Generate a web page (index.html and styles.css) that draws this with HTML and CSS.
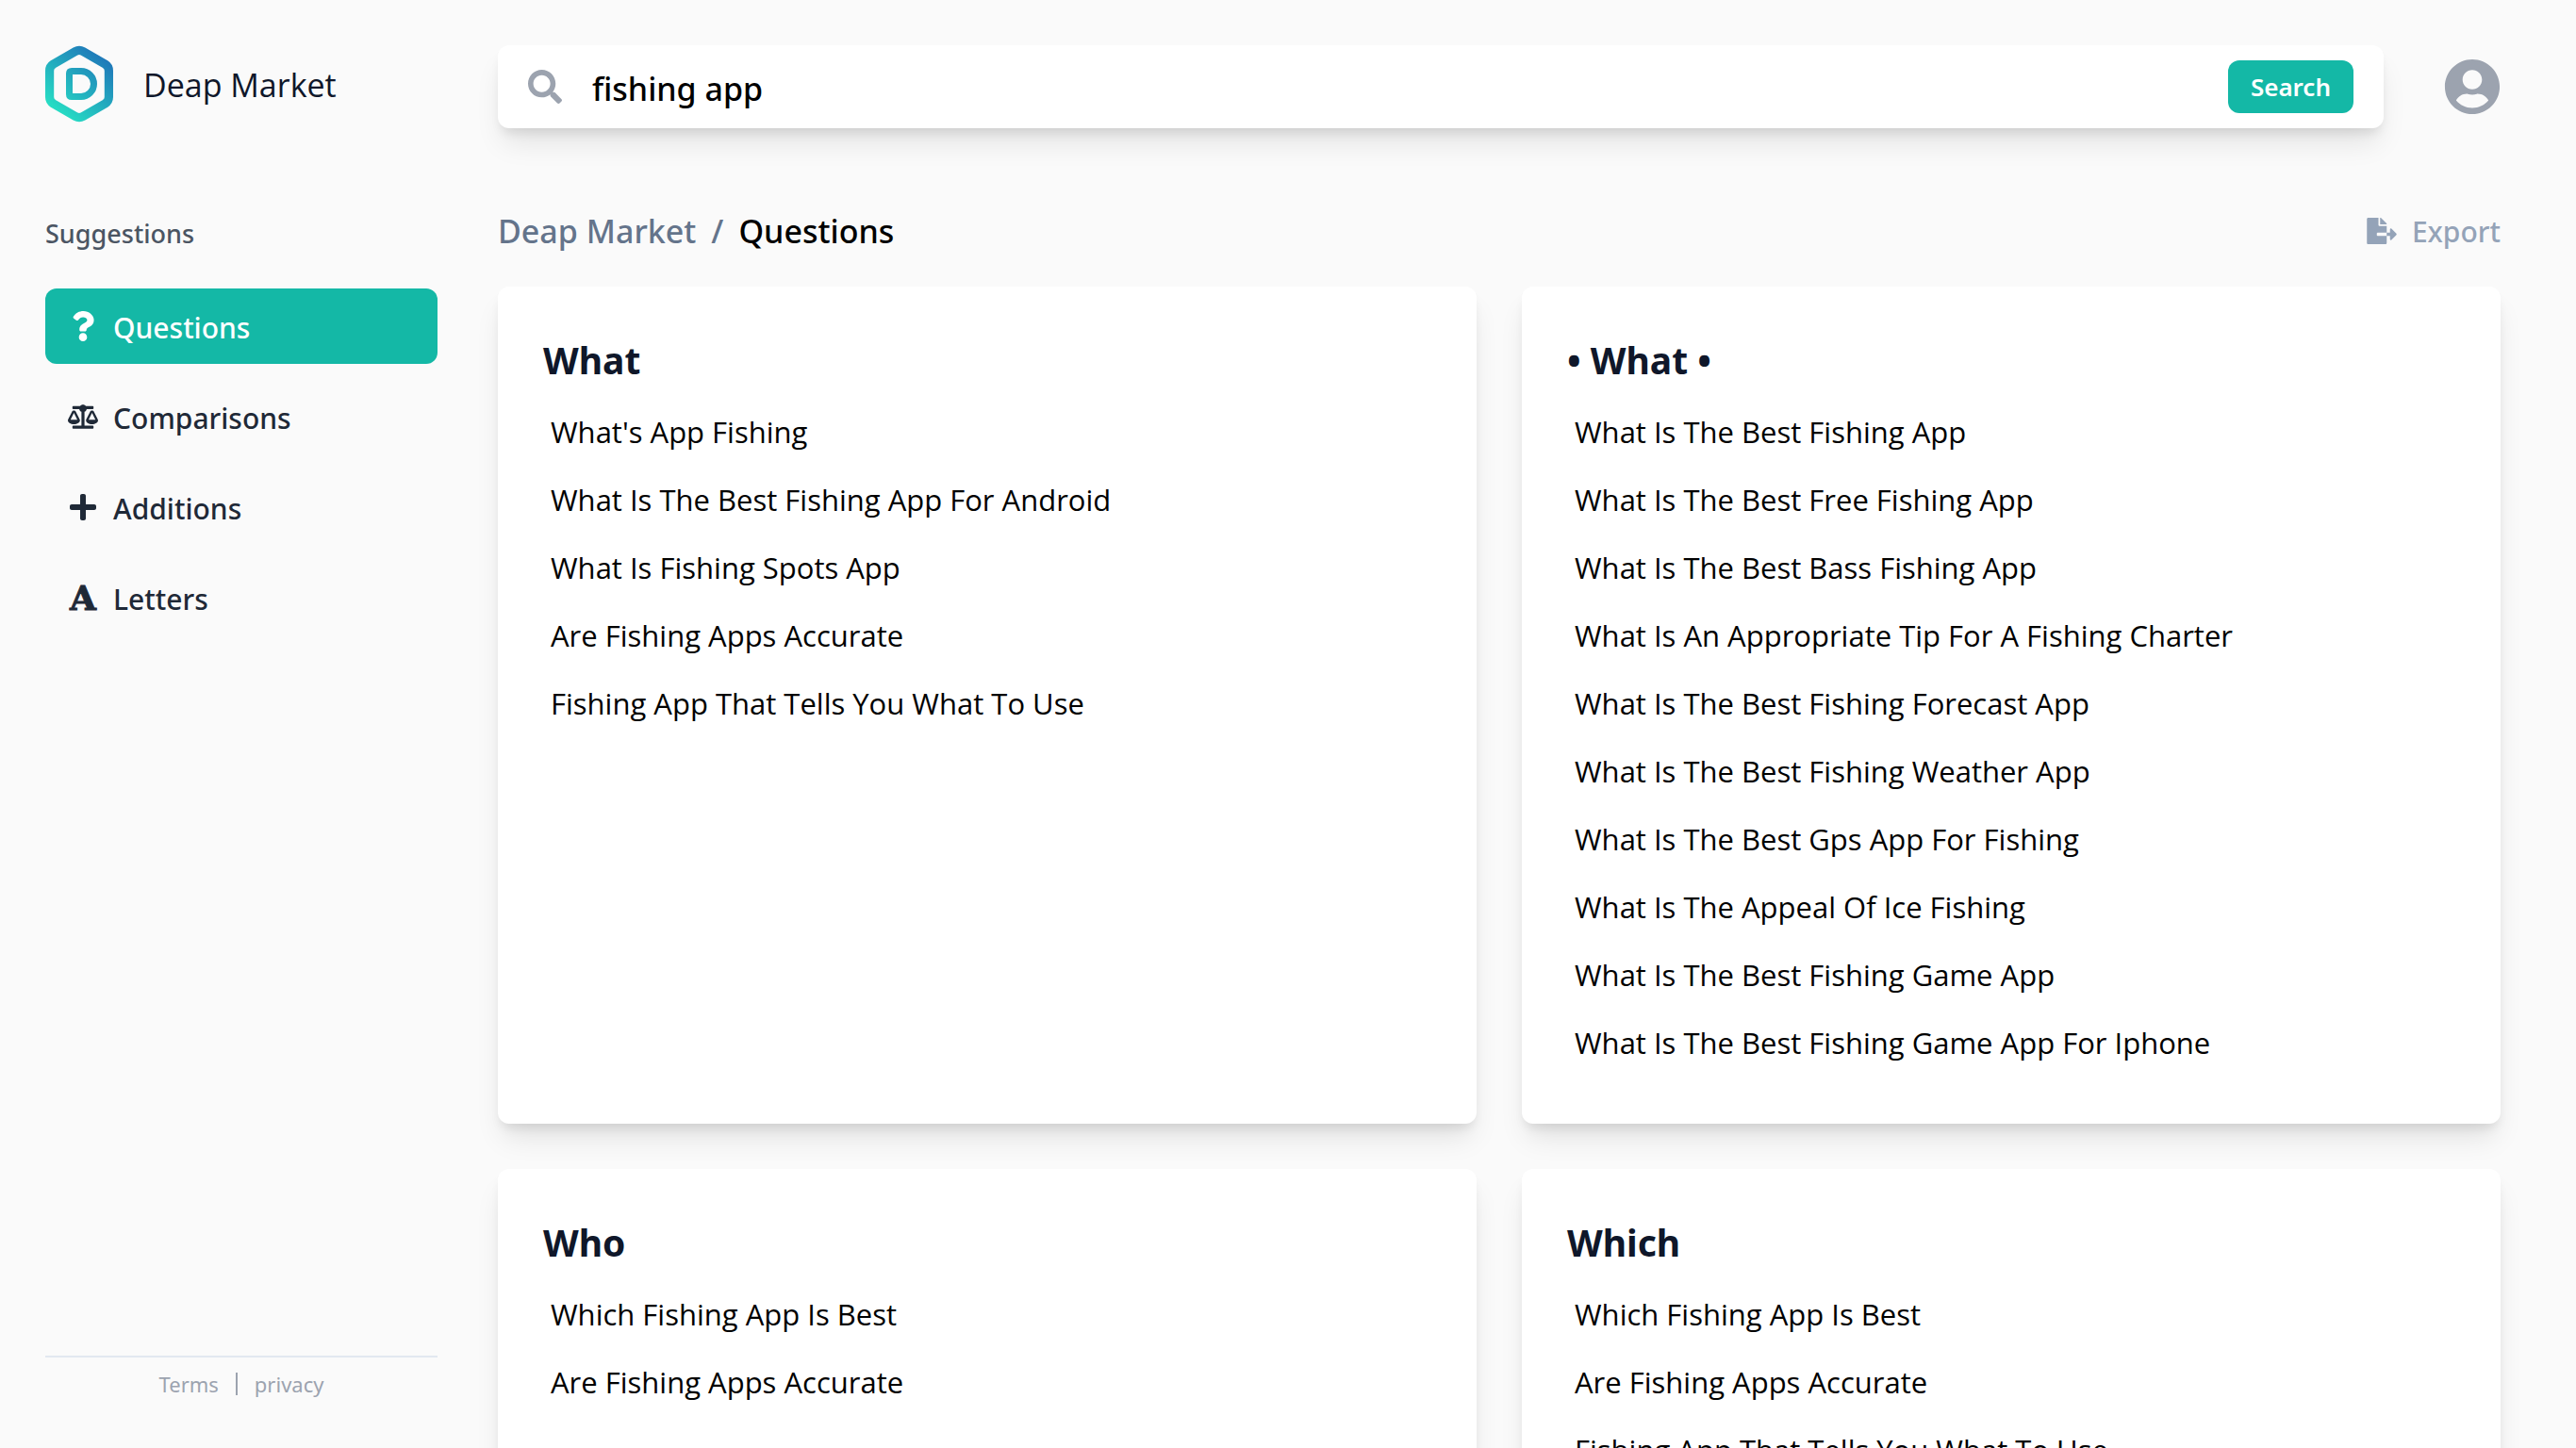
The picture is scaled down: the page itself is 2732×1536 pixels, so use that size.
FILE: index.html
```html
<!DOCTYPE html>
<html lang="en">
<head>
    <meta charset="UTF-8">
    <meta name="viewport" content="width=device-width, initial-scale=1.0">
    <title>Deap Market</title>
    <link rel="stylesheet" href="styles.css">
</head>
<body>
    <div class="layout">
        <aside class="sidebar">
            <a class="brand" href="#">
                <svg class="logo" viewBox="0 0 72 82" aria-hidden="true">
                    <defs>
                        <linearGradient id="logo-fill" gradientUnits="userSpaceOnUse" x1="12" y1="72" x2="62" y2="12">
                            <stop offset="0" stop-color="#27dfc4"/>
                            <stop offset="1" stop-color="#1f78b9"/>
                        </linearGradient>
                    </defs>
                    <path d="M32 6.500Q36 4.200 40 6.500L63.400 20Q67.400 22.500 67.400 27V55Q67.400 59.500 63.400 62L40 75.500Q36 77.800 32 75.500L8.600 62Q4.600 59.500 4.600 55V27Q4.600 22.500 8.600 20Z" fill="none" stroke="url(#logo-fill)" stroke-width="9.200" stroke-linejoin="round"/>
                    <path d="M28 27.500H38A13.500 13.500 0 0 1 38 54.500H28Q25.500 54.500 25.500 52V30Q25.500 27.500 28 27.500Z" fill="none" stroke="url(#logo-fill)" stroke-width="7" stroke-linejoin="round"/>
                </svg>
                <span>Deap Market</span>
            </a>

            <h2 class="sidebar-title">Suggestions</h2>
            <nav class="menu">
                <a class="menu-item active" href="#">
                    <svg viewBox="0 0 384 512" aria-hidden="true"><path d="M202.021 0C122.202 0 70.503 32.703 29.914 91.026c-7.363 10.580-5.093 25.086 5.178 32.874l43.138 32.709c10.373 7.865 25.132 6.026 33.253-4.148 25.049-31.381 43.630-49.449 82.757-49.449 30.764 0 68.816 19.799 68.816 49.631 0 22.552-18.617 34.134-48.993 51.164-35.423 19.860-82.299 44.576-82.299 106.405V320c0 13.255 10.745 24 24 24h72.471c13.255 0 24-10.745 24-24v-5.773c0-42.860 125.268-44.645 125.268-160.627C377.504 66.256 286.902 0 202.021 0zM192 373.459c-38.196 0-69.271 31.075-69.271 69.271 0 38.195 31.075 69.270 69.271 69.270s69.271-31.075 69.271-69.271-31.075-69.270-69.271-69.270z"/></svg>
                    <span>Questions</span>
                </a>
                <a class="menu-item" href="#">
                    <svg class="scale-icon" viewBox="0 0 640 512" aria-hidden="true"><path d="M256 336h-.02c0-16.18 1.34-8.73-85.05-181.51-17.65-35.29-68.19-35.36-85.87 0C-2.06 328.75.02 320.33.02 336H0c0 44.18 57.31 80 128 80s128-35.82 128-80zM128 176l72 144H56l72-144zm511.98 160c0-16.18 1.34-8.73-85.05-181.51-17.65-35.29-68.19-35.36-85.87 0-87.12 174.26-85.04 165.84-85.04 181.51H384c0 44.18 57.31 80 128 80s128-35.82 128-80h-.02zM440 320l72-144 72 144H440zm88 128H352V153.25c23.51-10.29 41.16-31.48 46.39-57.25H528c8.84 0 16-7.16 16-16V48c0-8.84-7.16-16-16-16H383.64C369.04 12.68 346.09 0 320 0s-49.04 12.68-63.64 32H112c-8.84 0-16 7.16-16 16v32c0 8.84 7.16 16 16 16h129.61c5.23 25.76 22.87 46.96 46.39 57.25V448H112c-8.84 0-16 7.16-16 16v32c0 8.84 7.16 16 16 16h416c8.84 0 16-7.16 16-16v-32c0-8.84-7.16-16-16-16z"/></svg>
                    <span>Comparisons</span>
                </a>
                <a class="menu-item" href="#">
                    <svg viewBox="0 0 448 512" aria-hidden="true"><path d="M416 208H272V64c0-17.67-14.33-32-32-32h-32c-17.67 0-32 14.33-32 32v144H32c-17.67 0-32 14.33-32 32v32c0 17.67 14.33 32 32 32h144v144c0 17.67 14.33 32 32 32h32c17.67 0 32-14.33 32-32V304h144c17.67 0 32-14.33 32-32v-32c0-17.67-14.33-32-32-32z"/></svg>
                    <span>Additions</span>
                </a>
                <a class="menu-item" href="#">
                    <b class="letter-icon" aria-hidden="true">A</b>
                    <span>Letters</span>
                </a>
            </nav>

            <footer class="sidebar-footer">
                <a href="#">Terms</a>
                <span class="divider"></span>
                <a href="#">privacy</a>
            </footer>
        </aside>

        <main class="main">
            <header class="topbar">
                <form class="search" role="search">
                    <label for="query" aria-label="Search phrase">
                        <svg class="search-icon" viewBox="0 0 512 512" aria-hidden="true"><path d="M505 442.7L405.3 343c-4.5-4.5-10.6-7-17-7H372c27.6-35.3 44-79.7 44-128C416 93.1 322.9 0 208 0S0 93.1 0 208s93.1 208 208 208c48.3 0 92.7-16.4 128-44v16.3c0 6.4 2.5 12.5 7 17l99.7 99.7c9.4 9.4 24.6 9.4 33.9 0l28.3-28.3c9.4-9.4 9.4-24.6.1-34zM208 336c-70.7 0-128-57.2-128-128 0-70.7 57.2-128 128-128 70.7 0 128 57.2 128 128 0 70.7-57.2 128-128 128z"/></svg>
                    </label>
                    <input type="text" id="query" value="fishing app">
                    <button type="submit">Search</button>
                </form>
                <button class="account" type="button" aria-label="Account">
                    <svg viewBox="0 0 496 512" aria-hidden="true"><path d="M248 8C111 8 0 119 0 256s111 248 248 248 248-111 248-248S385 8 248 8zm0 96c48.6 0 88 39.4 88 88s-39.4 88-88 88-88-39.4-88-88 39.4-88 88-88zm0 344c-58.7 0-111.3-26.6-146.5-68.2 18.8-35.4 55.6-59.8 98.5-59.8 2.4 0 4.8.4 7.1 1.1 13 4.2 26.6 6.9 40.9 6.9 14.3 0 28-2.7 40.9-6.9 2.3-.7 4.7-1.1 7.1-1.1 42.9 0 79.7 24.4 98.5 59.8C359.3 421.4 306.7 448 248 448z"/></svg>
                </button>
            </header>

            <div class="page-head">
                <div class="breadcrumb">
                    <a href="#">Deap Market</a>
                    <span>/</span>
                    <h1>Questions</h1>
                </div>
                <button class="export" type="button">
                    <svg viewBox="0 0 576 512" aria-hidden="true"><path d="M384 121.9c0-6.3-2.5-12.4-7-16.9L279.1 7c-4.5-4.5-10.6-7-17-7H256v128h128zM571 308l-95.7-96.4c-10.1-10.1-27.4-3-27.4 11.3V288h-64v64h64v65.2c0 14.3 17.3 21.4 27.4 11.3L571 332c6.6-6.6 6.6-17.4 0-24zm-379 28v-32c0-8.8 7.2-16 16-16h176V160H248c-13.2 0-24-10.8-24-24V0H24C10.7 0 0 10.7 0 24v464c0 13.3 10.7 24 24 24h336c13.3 0 24-10.7 24-24V352H208c-8.800 0-16-7.200-16-16z"/></svg>
                    Export
                </button>
            </div>

            <div class="cards">
                <section class="card">
                    <h2>What</h2>
                    <ul>
                        <li>What's App Fishing</li>
                        <li>What Is The Best Fishing App For Android</li>
                        <li>What Is Fishing Spots App</li>
                        <li>Are Fishing Apps Accurate</li>
                        <li>Fishing App That Tells You What To Use</li>
                    </ul>
                </section>
                <section class="card">
                    <h2>• What •</h2>
                    <ul>
                        <li>What Is The Best Fishing App</li>
                        <li>What Is The Best Free Fishing App</li>
                        <li>What Is The Best Bass Fishing App</li>
                        <li>What Is An Appropriate Tip For A Fishing Charter</li>
                        <li>What Is The Best Fishing Forecast App</li>
                        <li>What Is The Best Fishing Weather App</li>
                        <li>What Is The Best Gps App For Fishing</li>
                        <li>What Is The Appeal Of Ice Fishing</li>
                        <li>What Is The Best Fishing Game App</li>
                        <li>What Is The Best Fishing Game App For Iphone</li>
                    </ul>
                </section>
                <section class="card">
                    <h2>Who</h2>
                    <ul>
                        <li>Which Fishing App Is Best</li>
                        <li>Are Fishing Apps Accurate</li>
                    </ul>
                </section>
                <section class="card">
                    <h2>Which</h2>
                    <ul>
                        <li>Which Fishing App Is Best</li>
                        <li>Are Fishing Apps Accurate</li>
                        <li>Fishing App That Tells You What To Use</li>
                    </ul>
                </section>
            </div>
        </main>
    </div>
</body>
</html>
```
FILE: styles.css
```css
* {
    box-sizing: border-box;
    margin: 0;
    padding: 0;
}

body {
    font-family: "Noto Sans", "Open Sans", sans-serif;
    background: #fafafa;
    color: #000;
}

a {
    color: inherit;
    text-decoration: none;
}

button,
input {
    font-family: inherit;
    border: none;
    background: none;
}

button {
    cursor: pointer;
}

svg {
    display: block;
    fill: currentColor;
}

.layout {
    display: flex;
    height: 100vh;
    overflow: hidden;
}

/* Sidebar */
.sidebar {
    display: flex;
    flex-direction: column;
    flex: none;
    width: 464px;
    padding: 48px 0 48px 48px;
}

.brand {
    display: flex;
    align-items: center;
    gap: 32px;
    height: 82px;
    font-family: "Open Sans", sans-serif;
    font-size: 34px;
    color: #0f172a;
}

.brand span,
.menu-item span {
    padding-top: 2px;
}

.logo {
    width: 72px;
    height: 82px;
}

.sidebar-title {
    margin-top: 98px;
    font-size: 27px;
    font-weight: 500;
    line-height: 40px;
    color: #4b5563;
}

.menu {
    display: flex;
    flex-direction: column;
    gap: 16px;
    margin-top: 38px;
}

.menu-item {
    display: flex;
    align-items: center;
    gap: 16px;
    height: 80px;
    padding: 0 24px;
    border-radius: 12px;
    font-size: 30px;
    font-weight: 500;
    color: #1f2937;
}

.menu-item.active {
    background: #14b8a6;
    color: #fff;
}

.menu-item svg,
.letter-icon {
    width: 32px;
    height: 32px;
}

.menu-item .scale-icon {
    height: 26px;
}

.letter-icon {
    display: flex;
    align-items: center;
    justify-content: center;
    font-family: "DejaVu Serif", serif;
    font-size: 36px;
    font-weight: 700;
    line-height: 32px;
    -webkit-text-stroke: 1px currentColor;
}

.sidebar-footer {
    display: flex;
    align-items: center;
    justify-content: center;
    gap: 18px;
    margin-top: auto;
    padding: 10px 0 2px;
    border-top: 2px solid #e2e8f0;
    font-size: 22px;
    line-height: 36px;
    color: #9ca3af;
}

.divider {
    width: 2px;
    height: 24px;
    background: #9ca3af;
}

/* Main */
.main {
    flex: 1;
    min-width: 0;
    padding: 48px 80px 0 64px;
}

.topbar {
    display: flex;
    align-items: center;
    gap: 64px;
}

.search {
    display: flex;
    align-items: center;
    flex: 1;
    gap: 32px;
    height: 88px;
    padding: 0 32px;
    border-radius: 12px;
    background: #fff;
    box-shadow: 0 20px 30px -6px rgba(0, 0, 0, 0.1), 0 8px 12px -4px rgba(0, 0, 0, 0.1);
}

.search-icon {
    width: 36px;
    height: 36px;
    color: #9ca3af;
}

.search input {
    flex: 1;
    min-width: 0;
    height: 88px;
    padding-top: 4px;
    outline: none;
    font-size: 34px;
    font-weight: 500;
    color: #000;
}

.search button {
    height: 56px;
    padding: 0 24px;
    border-radius: 12px;
    background: #14b8a6;
    font-size: 26px;
    font-weight: 600;
    color: #fff;
}

.account svg {
    width: 60px;
    height: 60px;
    color: #9ca3af;
}

.page-head {
    display: flex;
    align-items: center;
    justify-content: space-between;
    height: 56px;
    margin: 81px 0 31px;
}

.breadcrumb {
    display: flex;
    align-items: center;
    gap: 16px;
    font-size: 34px;
    font-weight: 500;
    color: #64748b;
}

.breadcrumb h1 {
    font-size: 34px;
    font-weight: 500;
    color: #000;
}

.export {
    display: flex;
    align-items: center;
    gap: 16px;
    font-size: 30px;
    font-weight: 500;
    color: #94a3b8;
}

.export svg {
    width: 32px;
    height: 28px;
}

.cards {
    display: grid;
    grid-template-columns: 1fr 1fr;
    gap: 48px;
}

.card {
    padding: 50px 48px 48px;
    border-radius: 12px;
    background: #fff;
    box-shadow: 0 20px 30px -6px rgba(0, 0, 0, 0.1), 0 8px 12px -4px rgba(0, 0, 0, 0.1);
}

.card h2 {
    margin-bottom: 12px;
    font-size: 39px;
    font-weight: 700;
    line-height: 56px;
    color: #0f172a;
}

.card ul {
    padding-bottom: 2px;
    list-style: none;
}

.card li {
    padding: 0 8px;
    font-family: "Open Sans", sans-serif;
    font-size: 31px;
    line-height: 72px;
}
```
